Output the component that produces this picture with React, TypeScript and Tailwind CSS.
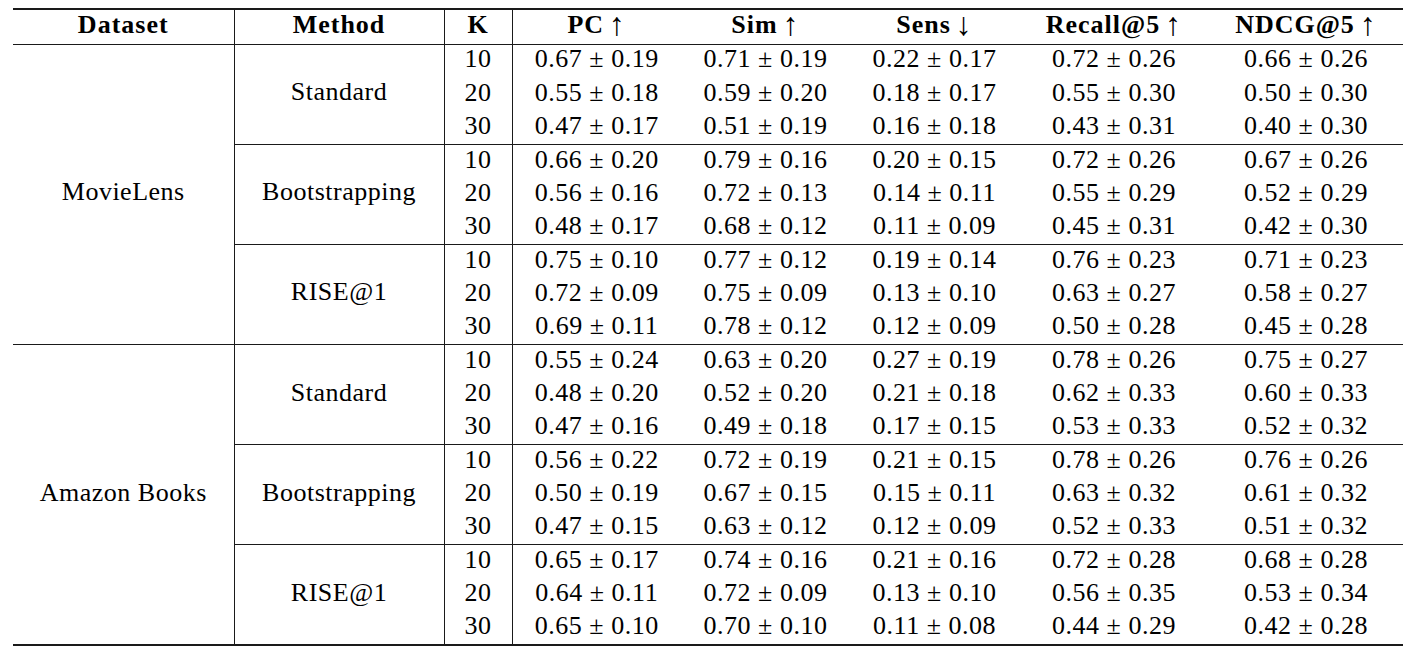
const data = [
  {
    name: 'MovieLens',
    methods: [
      { name: 'Standard', rows: [
        ['10', '0.67 0.19', '0.71 0.19', '0.22 0.17', '0.72 0.26', '0.66 0.26'],
        ['20', '0.55 0.18', '0.59 0.20', '0.18 0.17', '0.55 0.30', '0.50 0.30'],
        ['30', '0.47 0.17', '0.51 0.19', '0.16 0.18', '0.43 0.31', '0.40 0.30'],
      ] },
      { name: 'Bootstrapping', rows: [
        ['10', '0.66 0.20', '0.79 0.16', '0.20 0.15', '0.72 0.26', '0.67 0.26'],
        ['20', '0.56 0.16', '0.72 0.13', '0.14 0.11', '0.55 0.29', '0.52 0.29'],
        ['30', '0.48 0.17', '0.68 0.12', '0.11 0.09', '0.45 0.31', '0.42 0.30'],
      ] },
      { name: 'RISE@1', rows: [
        ['10', '0.75 0.10', '0.77 0.12', '0.19 0.14', '0.76 0.23', '0.71 0.23'],
        ['20', '0.72 0.09', '0.75 0.09', '0.13 0.10', '0.63 0.27', '0.58 0.27'],
        ['30', '0.69 0.11', '0.78 0.12', '0.12 0.09', '0.50 0.28', '0.45 0.28'],
      ] },
    ],
  },
  {
    name: 'Amazon Books',
    methods: [
      { name: 'Standard', rows: [
        ['10', '0.55 0.24', '0.63 0.20', '0.27 0.19', '0.78 0.26', '0.75 0.27'],
        ['20', '0.48 0.20', '0.52 0.20', '0.21 0.18', '0.62 0.33', '0.60 0.33'],
        ['30', '0.47 0.16', '0.49 0.18', '0.17 0.15', '0.53 0.33', '0.52 0.32'],
      ] },
      { name: 'Bootstrapping', rows: [
        ['10', '0.56 0.22', '0.72 0.19', '0.21 0.15', '0.78 0.26', '0.76 0.26'],
        ['20', '0.50 0.19', '0.67 0.15', '0.15 0.11', '0.63 0.32', '0.61 0.32'],
        ['30', '0.47 0.15', '0.63 0.12', '0.12 0.09', '0.52 0.33', '0.51 0.32'],
      ] },
      { name: 'RISE@1', rows: [
        ['10', '0.65 0.17', '0.74 0.16', '0.21 0.16', '0.72 0.28', '0.68 0.28'],
        ['20', '0.64 0.11', '0.72 0.09', '0.13 0.10', '0.56 0.35', '0.53 0.34'],
        ['30', '0.65 0.10', '0.70 0.10', '0.11 0.08', '0.44 0.29', '0.42 0.28'],
      ] },
    ],
  },
]

// label + arrow (null for plain headers)
const headers: [string, string | null][] = [
  ['Dataset', null], ['Method', null], ['K', null],
  ['PC', '↑'], ['Sim', '↑'], ['Sens', '↓'], ['Recall@5', '↑'], ['NDCG@5', '↑'],
]

function pm(v: string) {
  const [m, s] = v.split(' ')
  return `${m} ± ${s}`
}

export default function App() {
  return (
    <div className="bg-white w-[1428px] h-[664px] pt-[8px] pl-[13px] text-black" style={{ fontFamily: '"Liberation Serif", "Times New Roman", serif' }}>
      <table className="table-fixed border-collapse w-[1390px] text-[26px] tracking-[0.5px] leading-none">
        <colgroup>
          <col className="w-[221px]" />
          <col className="w-[210px]" />
          <col className="w-[68px]" />
          <col className="w-[169px]" />
          <col className="w-[169px]" />
          <col className="w-[169px]" />
          <col className="w-[190px]" />
          <col className="w-[194px]" />
        </colgroup>
        <thead>
          <tr className="h-[35px] border-t-2 border-b border-[#1a1a1a]">
            {headers.map(([h, arrow], i) => (
              <th key={h} className={`p-0 pb-[3px] text-center font-bold tracking-[1px] align-middle ${i < 3 ? 'border-r border-[#1a1a1a]' : ''}`}>
                {h}
                {arrow && (
                  <span className="inline-block ml-[5px] font-normal text-[32px] leading-[0] align-[-2px]">{arrow}</span>
                )}
              </th>
            ))}
          </tr>
        </thead>
        <tbody>
          {data.map((ds, di) =>
            ds.methods.map((m, mi) =>
              m.rows.map((r, ri) => (
                <tr key={`${di}-${mi}-${ri}`}
                  className={`h-[33.4px] ${ri === 2 && mi === 2 ? (di === 1 ? 'border-b-2 border-[#1a1a1a]' : 'border-b border-[#1a1a1a]') : ''}`}>
                  {mi === 0 && ri === 0 && (
                    <td rowSpan={9} className="p-0 pb-[4px] text-center align-middle border-r border-[#1a1a1a]">{ds.name}</td>
                  )}
                  {ri === 0 && (
                    <td rowSpan={3} className={`p-0 pb-[4px] text-center align-middle border-r border-[#1a1a1a] ${mi < 2 ? 'border-b' : ''}`}>{m.name}</td>
                  )}
                  <td className={`p-0 pb-[3px] text-center align-middle border-r border-[#1a1a1a] ${ri === 2 && mi < 2 ? 'border-b' : ''}`}>{r[0]}</td>
                  {r.slice(1).map((v, ci) => (
                    <td key={ci} className={`p-0 pb-[3px] text-center align-middle ${ri === 2 && mi < 2 ? 'border-b border-[#1a1a1a]' : ''}`}>{pm(v)}</td>
                  ))}
                </tr>
              ))
            )
          )}
        </tbody>
      </table>
    </div>
  )
}
